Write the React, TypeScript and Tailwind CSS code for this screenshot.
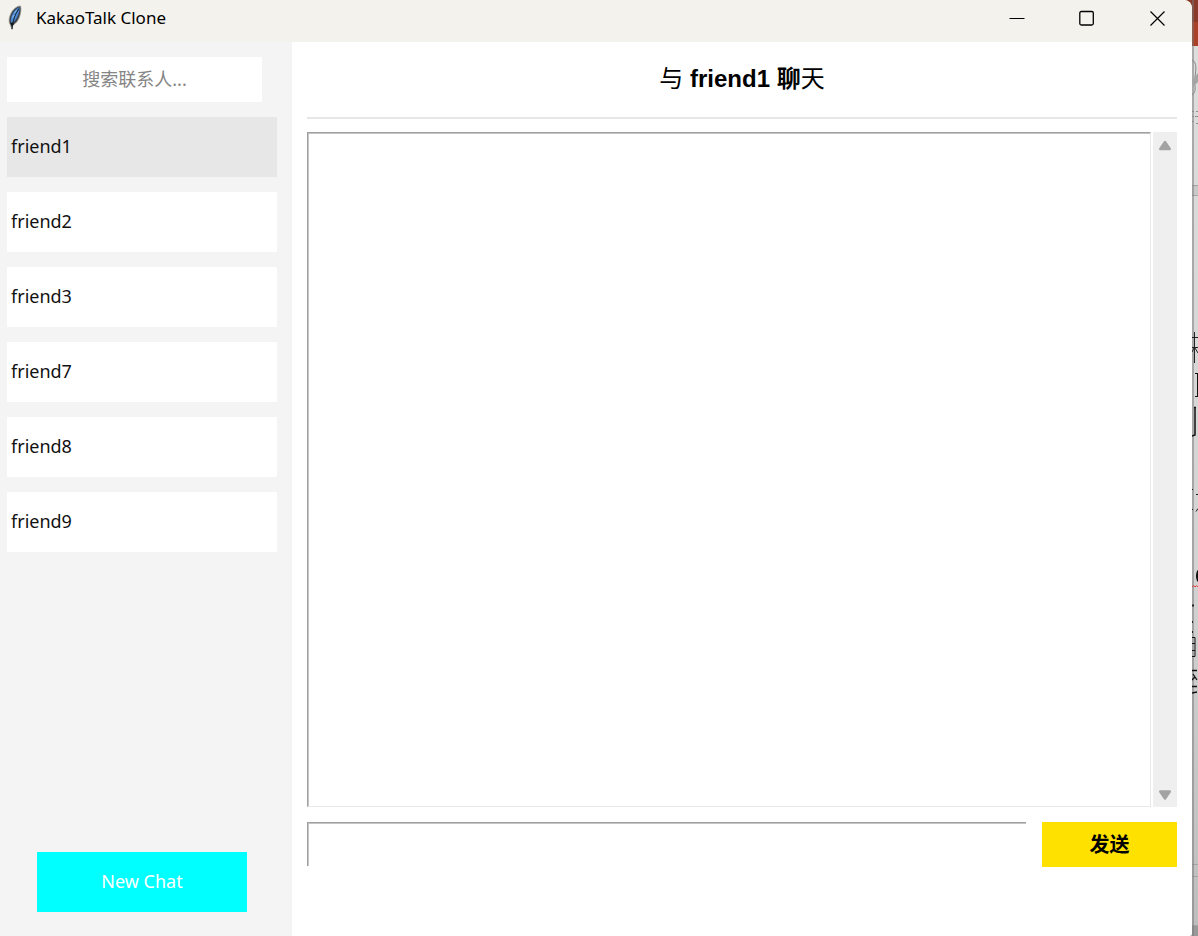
import { useState } from 'react';

const friends = ['friend1', 'friend2', 'friend3', 'friend7', 'friend8', 'friend9'];

function Feather() {
  return (
    <svg width="16" height="26" viewBox="0 0 16 26" aria-hidden="true">
      <path d="M13.500 1C10 .8 5.500 4.500 3.500 9.500 1.800 13.500 1.500 17 3.500 20l1.500 4.500.9-4.500c3-1.500 5.500-4.500 6.700-8.500C14 7.500 14.300 3.500 13.500 1Z" fill="#3a4450" stroke="#99968c" strokeWidth=".8" />
      <path d="M12.600 2.200C9.500 3.200 6 7 4.600 11.500 3.700 14.500 3.600 16.500 4.400 18c3.200-1.200 5.200-4 6.600-8C12 7 12.800 4.500 12.600 2.200Z" fill="#4a8ad6" />
      <path d="M12.200 3.500C8.500 8 6 13 5 24" fill="none" stroke="#1c2733" strokeWidth="1.100" />
      <path d="M3.300 17.500c.2 2 .8 3 1.700 3.500.8-.6 1.600-1.300 2.500-2.500Z" fill="#15191e" />
      <path d="m7.500 8 2-2.500M5.500 13l1.500-3" stroke="#8bbcf3" strokeWidth="1" />
    </svg>
  );
}

function TitleBar() {
  return (
    <header className="flex h-[42px] shrink-0 items-start justify-between rounded-tr-lg bg-[#f3f2ed]">
      <div className="flex h-9 items-center pl-[7px]">
        <Feather />
        <h1 className="pl-[13px] font-['Noto_Sans',sans-serif] text-[17px] leading-6 text-black">KakaoTalk Clone</h1>
      </div>
      <div className="flex h-9">
        <button type="button" aria-label="Minimize" className="flex w-[70px] items-center justify-center">
          <svg width="16" height="16" viewBox="0 0 16 16"><path d="M.5 8.500h15" stroke="#000" /></svg>
        </button>
        <button type="button" aria-label="Maximize" className="flex w-[70px] items-center justify-center">
          <svg width="16" height="16" viewBox="0 0 16 16"><rect x=".8" y="1.500" width="13.500" height="13.500" rx="1.500" fill="none" stroke="#000" strokeWidth="1.300" /></svg>
        </button>
        <button type="button" aria-label="Close" className="flex w-[70px] items-center justify-center">
          <svg width="16" height="16" viewBox="0 0 16 16"><path d="m1.500 1.500 14 14m0-14-14 14" stroke="#000" strokeWidth="1.200" /></svg>
        </button>
      </div>
    </header>
  );
}

function Sidebar({ active, onSelect }: { active: string; onSelect: (name: string) => void }) {
  return (
    <aside className="flex w-[292px] shrink-0 flex-col bg-[#f4f4f4] pt-[15px] pr-[15px] pb-6 pl-[7px] font-['Noto_Sans','Noto_Sans_CJK_SC',sans-serif]">
      <input
        type="text"
        aria-label="搜索联系人"
        placeholder="搜索联系人..."
        className="mr-[15px] h-[45px] bg-white pb-0.5 text-center text-[18px] text-black outline-none placeholder:text-[#858585]"
      />
      <ul className="mt-[15px] flex flex-col gap-[15px]">
        {friends.map((name) => (
          <li key={name}>
            <button
              type="button"
              onClick={() => onSelect(name)}
              className={`block h-[60px] w-full pb-0.5 pl-1 text-left text-[18px] text-[#111111] ${name === active ? 'bg-[#e7e7e7]' : 'bg-white'}`}
            >
              {name}
            </button>
          </li>
        ))}
      </ul>
      <button type="button" className="mx-[30px] mt-auto h-[60px] bg-[#00ffff] pb-0.5 text-[18px] text-white">
        New Chat
      </button>
    </aside>
  );
}

function ScrollBar() {
  return (
    <div className="ml-0.5 flex w-6 flex-col justify-between bg-[#efefef]">
      <button type="button" aria-label="Scroll up" className="flex h-[26px] items-center justify-center">
        <svg width="14" height="12" viewBox="0 0 14 12"><path d="M7 3 11.800 10H2.200Z" fill="#a3a3a3" stroke="#a3a3a3" strokeWidth="2.400" strokeLinejoin="round" /></svg>
      </button>
      <button type="button" aria-label="Scroll down" className="flex h-6 items-center justify-center">
        <svg width="14" height="12" viewBox="0 0 14 12"><path d="M2.200 2.500h9.600L7 9.500Z" fill="#a3a3a3" stroke="#a3a3a3" strokeWidth="2.400" strokeLinejoin="round" /></svg>
      </button>
    </div>
  );
}

function Chat({ active }: { active: string }) {
  return (
    <main className="flex min-w-0 flex-1 flex-col bg-white px-[15px] pb-[69px]">
      <h2 className="flex h-[77px] items-center justify-center border-b-2 border-[#e6e6e6] pb-0.5 font-['Liberation_Sans','Noto_Sans_CJK_SC',sans-serif] text-[24px] font-bold text-black">
        <span className="whitespace-pre"><span className="font-normal">与</span> {active} 聊<span className="font-normal">天</span></span>
      </h2>
      <div className="mt-[13px] flex flex-1">
        <textarea
          aria-label="聊天记录"
          readOnly
          className="min-w-0 flex-1 resize-none overflow-hidden border border-t-[#a0a0a0] border-r-[#e8e8e8] border-b-[#e8e8e8] border-l-[#a0a0a0] bg-white p-2 shadow-[inset_1px_1px_0_#c4c4c4] outline-none"
        />
        <ScrollBar />
      </div>
      <form className="mt-[15px] flex gap-4" onSubmit={(event) => event.preventDefault()}>
        <input
          aria-label="消息"
          className="h-11 min-w-0 flex-1 border-t border-l border-[#a0a0a0] bg-white px-2 text-[18px] shadow-[inset_1px_1px_0_#c4c4c4] outline-none"
        />
        <button type="submit" className="h-[45px] w-[135px] bg-[#ffe100] font-['Liberation_Sans','Noto_Sans_CJK_SC',sans-serif] text-[20px] font-bold text-black">
          发送
        </button>
      </form>
    </main>
  );
}

function DesktopEdge() {
  return (
    <svg className="w-1.5 shrink-0 self-stretch" viewBox="0 0 6 936" preserveAspectRatio="xMinYMin slice" aria-hidden="true">
      <defs>
        <linearGradient id="desk" x1="0" y1="0" x2="0" y2="1">
          <stop offset="0" stopColor="#dfdede" />
          <stop offset=".6" stopColor="#d3d3d3" />
          <stop offset="1" stopColor="#bdbdbd" />
        </linearGradient>
      </defs>
      <path d="M0 0h6v936H0Z" fill="url(#desk)" />
      <path d="M0 0h6v22H0Z" fill="#8b3a2a" />
      <path d="M0 22h6v24H0Z" fill="#a84127" />
      <path d="M0 185h6v10H0Z" fill="#c9c9c9" />
      <path d="M0 185.500h6M0 195.500h6M0 864.500h6M0 876.500h6M0 925.500h6" stroke="#a5a5a5" />
      <path d="M0 926h6v10H0Z" fill="#999" />
      <path d="M0 0h2v936H0Z" fill="#777" fillOpacity=".5" />
      <path d="M0 60c5 2 4 10 3 17M0 95c4-3 3-6 3-10" fill="none" stroke="#858585" />
      <path d="m0 80 6-7v9l-5 5Z" fill="#a5a5a5" />
      <path d="M0 111.500h2m2 0h2M0 116.500h2m1 0h3M0 121.500h2m2 2h2" stroke="#8d8d8d" />
      <path d="M2.500 332v31M0 337.500h6M0 347.500h6M2 348l-2 4M3 348l3 5" fill="none" stroke="#222" />
      <path d="M3 373.500h3M3 396.500h3M5.500 373v24" stroke="#111" />
      <path d="M2 407.500h2M3 408v27l-3 1" fill="none" stroke="#111" strokeWidth="1.500" />
      <path d="M0 489.500h1m3 5h2M0 509.500h1m3 2 2-3" stroke="#222" />
      <ellipse cx="6.500" cy="576" rx="2.500" ry="6" fill="#111" />
      <path d="m0 587 1.500-1.500L3 587l1.500-1.500L6 587" fill="none" stroke="#df3c3c" />
      <path d="M0 605.500h2M0 622h1M0 632h1" stroke="#222" strokeWidth="2" />
      <path d="M0 637.500h3v19H0M0 643.500h3M0 650.500h3" fill="none" stroke="#111" />
      <path d="M0 670.500h5M1 674l4 6M0 680l3-3M0 686.500h5M0 693l5-1" fill="none" stroke="#111" strokeWidth="1.300" />
    </svg>
  );
}

export default function App() {
  const [active, setActive] = useState('friend1');
  return (
    <div className="flex h-screen overflow-hidden bg-[linear-gradient(#8b3a2a_22px,#bdbdbd_22px)]">
      <div className="flex min-w-0 flex-1 flex-col overflow-hidden rounded-tr-lg rounded-br-sm bg-white">
        <TitleBar />
        <div className="flex min-h-0 flex-1">
          <Sidebar active={active} onSelect={setActive} />
          <Chat active={active} />
        </div>
      </div>
      <DesktopEdge />
    </div>
  );
}
